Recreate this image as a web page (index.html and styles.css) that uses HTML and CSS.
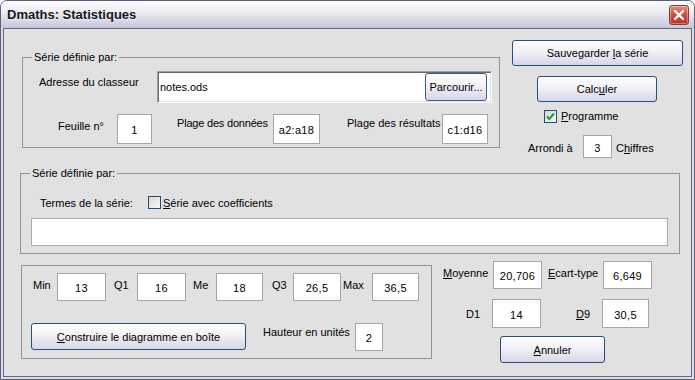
FILE: index.html
```html
<!DOCTYPE html>
<html lang="fr">
<head>
  <meta charset="UTF-8">
  <title>Dmaths: Statistiques</title>
  <link rel="stylesheet" href="styles.css">
</head>
<body>
  <div class="window">
    <div class="titlebar">
      <span class="title">Dmaths: Statistiques</span>
      <span class="close">
        <svg width="12" height="12" viewBox="0 0 12 12"><path d="M2 2 L10 10 M10 2 L2 10" stroke="#fff" stroke-width="2.4" stroke-linecap="round"/></svg>
      </span>
    </div>

    <div class="client">
      <div class="top-row">
        <fieldset class="group source">
          <legend>Série définie par:</legend>
          <div class="addr-row">
            <span class="addr-label">Adresse du classeur</span>
            <div class="filebox">
              <span class="filename">notes.ods</span>
              <button class="btn btn-browse">Parcourir...</button>
            </div>
          </div>
          <div class="sheet-row">
            <span class="lbl lbl-sheet">Feuille n°</span>
            <span class="val val-sheet">1</span>
            <span class="lbl lbl-data">Plage des données</span>
            <span class="val val-range">a2:a18</span>
            <span class="lbl lbl-result">Plage des résultats</span>
            <span class="val val-range2">c1:d16</span>
          </div>
        </fieldset>

        <div class="side">
          <button class="btn btn-save">Sauvegarder <u>l</u>a série</button>
          <button class="btn btn-calc">Calc<u>u</u>ler</button>
          <label class="check-row">
            <span class="check checked">
              <svg width="11" height="11" viewBox="0 0 11 11"><path d="M2 5.5 L4.3 8 L9 2.5" fill="none" stroke="#1f9e2b" stroke-width="2"/></svg>
            </span>
            <span><u>P</u>rogramme</span>
          </label>
          <div class="round-row">
            <span class="lbl-round">Arrondi à</span>
            <span class="val val-round">3</span>
            <span class="lbl-digits">C<u>h</u>iffres</span>
          </div>
        </div>
      </div>

      <fieldset class="group terms">
        <legend>Série définie par:</legend>
        <div class="terms-row">
          <span class="terms-label">Termes de la série:</span>
          <span class="check"></span>
          <span class="check-text"><u>S</u>érie avec coefficients</span>
        </div>
        <div class="terms-box"></div>
      </fieldset>

      <div class="bottom-row">
        <div class="box-group">
          <div class="quart-row">
            <span class="lbl q-min">Min</span>
            <span class="val v49">13</span>
            <span class="lbl q-q1">Q1</span>
            <span class="val v49">16</span>
            <span class="lbl q-me">Me</span>
            <span class="val v47">18</span>
            <span class="lbl q-q3">Q3</span>
            <span class="val v48">26,5</span>
            <span class="lbl q-max">Max</span>
            <span class="val v47">36,5</span>
          </div>
          <div class="box-row">
            <button class="btn btn-build"><u>C</u>onstruire le diagramme en boîte</button>
            <span class="lbl lbl-height">Hauteur en unités</span>
            <span class="val val-height">2</span>
          </div>
        </div>

        <div class="stats">
          <div class="stat-row">
            <span class="lbl s-mean"><u>M</u>oyenne</span>
            <span class="val v49">20,706</span>
            <span class="lbl s-sd"><u>E</u>cart-type</span>
            <span class="val v49">6,649</span>
          </div>
          <div class="stat-row deciles">
            <span class="lbl s-d1">D1</span>
            <span class="val v49 tall">14</span>
            <span class="lbl s-d9"><u>D</u>9</span>
            <span class="val v47 tall">30,5</span>
          </div>
          <button class="btn btn-cancel"><u>A</u>nnuler</button>
        </div>
      </div>
    </div>
  </div>
</body>
</html>
```

FILE: styles.css
```css
body {
  margin: 0;
  background-color: #ffffff;
  font-family: "Liberation Sans", Arial, sans-serif;
  font-size: 11px;
  color: #000000;
}

.window {
  width: 695px;
  height: 380px;
  box-sizing: border-box;
  border: 1px solid #5d6079;
  border-radius: 7px 7px 0 0;
  background-color: #dcdde8;
  display: flex;
  flex-direction: column;
  overflow: hidden;
}

.titlebar {
  height: 27px;
  flex: none;
  display: flex;
  align-items: center;
  justify-content: space-between;
  padding: 0 5px 0 6px;
  background: linear-gradient(#fdfdfe, #ececf3 40%, #c6c7da);
}

.title {
  font-weight: bold;
  font-size: 13px;
  color: #141624;
  text-shadow: 0 1px 0 rgba(255, 255, 255, 0.6);
}

.close {
  width: 20px;
  height: 20px;
  box-sizing: border-box;
  border: 1px solid #8e3a36;
  border-radius: 3px;
  background: linear-gradient(#e99186, #cf4d42 50%, #bb3329);
  box-shadow: inset 0 0 0 1px rgba(255, 255, 255, 0.35);
  display: flex;
  justify-content: center;
  align-items: center;
}

.client {
  flex: 1;
  margin: 0 2px 2px;
  border: 1px solid #63667f;
  background-color: #e1e1e1;
}

/* group boxes */

.group {
  margin: 0;
  padding: 0;
  box-sizing: border-box;
  border: 1px solid #939393;
}

.group legend {
  margin-left: 9px;
  padding: 0 2px;
  line-height: 13px;
}

.lbl {
  line-height: 14px;
  white-space: nowrap;
}

.val {
  box-sizing: border-box;
  height: 28px;
  padding-top: 2px;
  border: 1px solid #a6a6a6;
  background-color: #ffffff;
  display: flex;
  justify-content: center;
  align-items: center;
  flex: none;
  letter-spacing: 0.3px;
}

.btn {
  box-sizing: border-box;
  padding: 0;
  border: 1px solid #24507c;
  border-radius: 3px;
  background: linear-gradient(#ffffff, #f1f1f6 45%, #d7d6e6);
  font-family: inherit;
  font-size: 11px;
  color: #000000;
  flex: none;
}

.check {
  width: 13px;
  height: 13px;
  box-sizing: border-box;
  border: 1px solid #1e4f7e;
  background: linear-gradient(135deg, #d9d9d9, #f7f7f7);
  display: flex;
  justify-content: center;
  align-items: center;
  flex: none;
}

/* top part */

.top-row {
  display: flex;
  align-items: flex-start;
  height: 131px;
  box-sizing: border-box;
  padding: 11px 0 0 18px;
}

.source {
  margin-top: 11px;
  width: 478px;
  padding-bottom: 3px;
}

.addr-row {
  display: flex;
  align-items: flex-start;
  margin-top: 7px;
}

.addr-label {
  margin-left: 16px;
  width: 118px;
  padding-top: 4px;
  line-height: 14px;
}

.filebox {
  width: 335px;
  height: 32px;
  box-sizing: border-box;
  display: flex;
  align-items: center;
  padding: 1px 4px 1px 1px;
  background-color: #ffffff;
  border: 1px solid;
  border-color: #a0a0a0 #ffffff #ffffff #a0a0a0;
  box-shadow: inset 1px 1px 0 #6a6a6a, inset -1px -1px 0 #e3e3e3;
}

.filename {
  flex: 1;
  padding-left: 1px;
}

.btn-browse {
  width: 62px;
  height: 28px;
  border-color: #3a5f86;
}

.sheet-row {
  display: flex;
  align-items: flex-start;
  margin-top: 11px;
}

.sheet-row .val {
  height: 30px;
}

.lbl-sheet {
  margin-left: 35px;
  width: 59px;
  padding-top: 5px;
}

.val-sheet {
  width: 35px;
}

.lbl-data {
  margin-left: 25px;
  width: 96px;
  padding-top: 2px;
  letter-spacing: -0.2px;
}

.val-range {
  width: 47px;
}

.lbl-result {
  margin-left: 27px;
  width: 95px;
  padding-top: 2px;
}

.val-range2 {
  width: 46px;
}

.side {
  margin-left: 12px;
  width: 171px;
  display: flex;
  flex-direction: column;
  align-items: flex-start;
}

.btn-save {
  width: 171px;
  height: 26px;
}

.btn-calc {
  width: 120px;
  height: 26px;
  margin: 10px 0 0 25px;
}

.check-row {
  display: flex;
  align-items: center;
  gap: 4px;
  margin: 8px 0 0 32px;
  line-height: 13px;
}

.round-row {
  display: flex;
  align-items: center;
  margin-top: 12px;
}

.lbl-round {
  margin-left: 16px;
  width: 55px;
  padding-top: 2px;
}

.val-round {
  width: 29px;
  height: 23px;
}

.lbl-digits {
  margin-left: 4px;
  padding-top: 2px;
}

/* series terms */

.terms {
  margin: 7px 0 0 16px;
  width: 660px;
  padding-bottom: 7px;
}

.terms-row {
  display: flex;
  align-items: center;
  margin-top: 16px;
  padding-left: 19px;
  height: 13px;
}

.terms-label {
  width: 108px;
  padding-top: 1px;
}

.check-text {
  margin-left: 2px;
  padding-top: 1px;
}

.terms-box {
  margin: 9px 0 0 10px;
  width: 637px;
  height: 28px;
  box-sizing: border-box;
  border: 1px solid #a7adb3;
  background-color: #ffffff;
}

/* results */

.bottom-row {
  display: flex;
  align-items: flex-start;
  margin-top: 7px;
  padding-left: 17px;
}

.box-group {
  margin-top: 4px;
  width: 411px;
  height: 94px;
  box-sizing: border-box;
  border: 1px solid #939393;
}

.quart-row {
  display: flex;
  align-items: flex-start;
  margin: 7px 0 0 11px;
}

.quart-row .lbl {
  padding-top: 5px;
}

.v49 { width: 49px; }
.v48 { width: 48px; }
.v47 { width: 47px; }

.q-min { width: 24px; }
.q-q1 { margin-left: 8px; width: 23px; }
.q-me { margin-left: 7px; width: 23px; }
.q-q3 { margin-left: 9px; width: 21px; }
.q-max { margin-left: 2px; width: 29px; }

.box-row {
  display: flex;
  align-items: flex-start;
  margin: 22px 0 0 9px;
}

.btn-build {
  width: 215px;
  height: 27px;
}

.lbl-height {
  margin-left: 17px;
  width: 92px;
  padding-top: 2px;
}

.val-height {
  width: 28px;
}

.stats {
  margin-left: 11px;
  display: flex;
  flex-direction: column;
  align-items: flex-start;
}

.stat-row {
  display: flex;
  align-items: flex-start;
}

.s-mean { width: 50px; padding-top: 5px; }
.s-sd { margin-left: 6px; width: 55px; padding-top: 5px; }

.deciles {
  margin-top: 10px;
}

.val.tall {
  height: 29px;
}

.s-d1 { margin-left: 23px; width: 26px; padding-top: 8px; }
.s-d9 { margin-left: 35px; width: 26px; padding-top: 8px; }

.btn-cancel {
  width: 105px;
  height: 27px;
  margin: 8px 0 0 57px;
}
```
